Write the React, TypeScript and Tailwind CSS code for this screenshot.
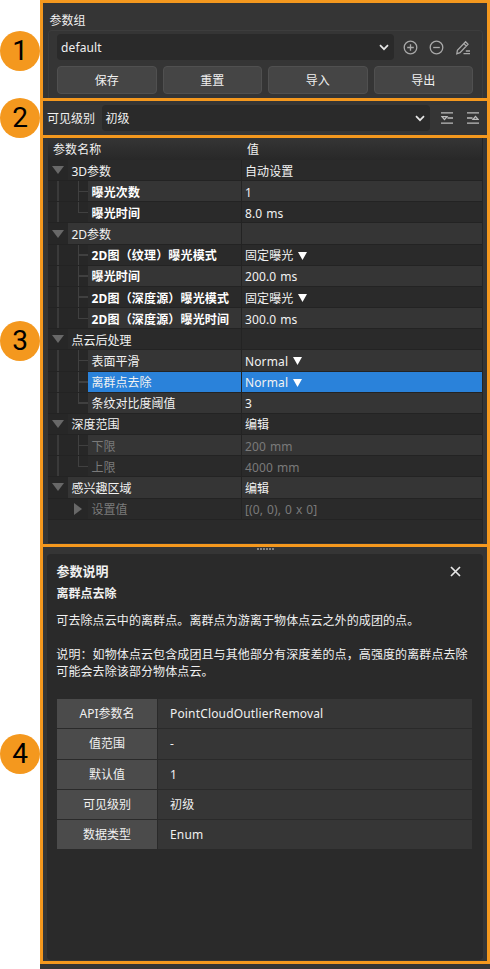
import React from "react";

type Row = {
  name: string;
  value?: string;
  kind: "group" | "child" | "last" | "nested";
  bold?: boolean;
  dim?: boolean;
  menu?: boolean;
  selected?: boolean;
};

const rows: Row[] = [
  { name: "3D参数", value: "自动设置", kind: "group" },
  { name: "曝光次数", value: "1", kind: "child", bold: true },
  { name: "曝光时间", value: "8.0 ms", kind: "last", bold: true },
  { name: "2D参数", kind: "group" },
  { name: "2D图（纹理）曝光模式", value: "固定曝光", kind: "child", bold: true, menu: true },
  { name: "曝光时间", value: "200.0 ms", kind: "child", bold: true },
  { name: "2D图（深度源）曝光模式", value: "固定曝光", kind: "child", bold: true, menu: true },
  { name: "2D图（深度源）曝光时间", value: "300.0 ms", kind: "last", bold: true },
  { name: "点云后处理", kind: "group" },
  { name: "表面平滑", value: "Normal", kind: "child", menu: true },
  { name: "离群点去除", value: "Normal", kind: "child", menu: true, selected: true },
  { name: "条纹对比度阈值", value: "3", kind: "last" },
  { name: "深度范围", value: "编辑", kind: "group" },
  { name: "下限", value: "200 mm", kind: "child", dim: true },
  { name: "上限", value: "4000 mm", kind: "last", dim: true },
  { name: "感兴趣区域", value: "编辑", kind: "group" },
  { name: "设置值", value: "[(0, 0), 0 x 0]", kind: "nested", dim: true },
];

const details = [
  ["API参数名", "PointCloudOutlierRemoval"],
  ["值范围", "-"],
  ["默认值", "1"],
  ["可见级别", "初级"],
  ["数据类型", "Enum"],
];

function Badge({ n, className }: { n: number; className: string }) {
  return (
    <div className={`flex size-10 shrink-0 items-center justify-center rounded-full bg-[#f4981e] font-['Roboto',sans-serif] text-[28px] leading-none text-black ${className}`}>
      {n}
    </div>
  );
}

function Chevron() {
  return (
    <svg width="10" height="7" viewBox="0 0 10 7" fill="none" stroke="#e6e6e6" strokeWidth="1.7">
      <path d="M1 1.2 5 5.2 9 1.2" />
    </svg>
  );
}

function Button({ children }: { children: React.ReactNode }) {
  return (
    <button className="h-7 flex-1 rounded border border-[#505050] bg-[#454545] text-[#f0f0f0]">{children}</button>
  );
}

function Guide({ kind }: { kind: "child" | "last" }) {
  return (
    <div className="flex w-5 shrink-0 pl-[9.5px]">
      <div className={`w-[1.5px] bg-[#404040] ${kind === "last" ? "h-[11px]" : "h-full"}`} />
      <div className="mt-[9.5px] h-[1.5px] flex-1 bg-[#404040]" />
    </div>
  );
}

function TreeRow({ row, index }: { row: Row; index: number }) {
  const bg = row.selected ? "bg-[#2a82da]" : index % 2 ? "bg-[#353535]" : "bg-[#2a2a2a]";
  const color = row.dim ? "text-[#7a7a7a]" : "text-[#f2f2f2]";
  return (
    <div className={`flex h-[21.17px] shrink-0 ${color}`}>
      <div className="flex w-5 shrink-0 items-center justify-center border-b border-[#232323] bg-[#272727]">
        {row.kind === "group" && (
          <svg width="12" height="8" viewBox="0 0 12 8"><path d="M0 0h12L6 8z" fill="#686868" /></svg>
        )}
        {(row.kind === "child" || row.kind === "last") && <div className="h-full w-[2px] bg-[#3a3a3a]" />}
      </div>
      <div className={`flex w-[173px] shrink-0 border-b border-[#232323] ${row.kind === "group" ? bg : "bg-[#272727]"}`}>
        {(row.kind === "child" || row.kind === "last") && <Guide kind={row.kind} />}
        {row.kind === "nested" && (
          <div className="flex w-5 shrink-0 items-center justify-center">
            <svg width="8" height="12" viewBox="0 0 8 12"><path d="M0 0v12l8-6z" fill="#686868" /></svg>
          </div>
        )}
        <div className={`flex flex-1 items-center whitespace-nowrap pt-[2px] pl-[3.5px] ${bg} ${row.bold ? "font-bold tracking-[0.17px] text-white" : ""}`}>
          {row.name}
        </div>
      </div>
      <div className={`flex flex-1 items-center gap-[5px] border-b border-l border-[#232323] pt-[2px] pl-[3px] ${bg}`}>
        <span className="tracking-[0.12px] [word-spacing:0.7px]">{row.value}</span>
        {row.menu && (
          <svg width="9" height="8" viewBox="0 0 9 8"><path d="M0 0h9L4.500 8z" fill="#fff" /></svg>
        )}
      </div>
    </div>
  );
}

export default function App() {
  return (
    <div className="flex h-[969px] w-[490px] overflow-hidden bg-white font-['Noto_Sans','Noto_Sans_CJK_SC',sans-serif] text-[12px] leading-[17px] text-[#f0f0f0]">
      <aside className="flex w-10 shrink-0 flex-col">
        <Badge n={1} className="mt-[31px]" />
        <Badge n={2} className="mt-[27px]" />
        <Badge n={3} className="mt-[183px]" />
        <Badge n={4} className="mt-[373px]" />
      </aside>

      <main className="flex w-[450px] shrink-0 flex-col bg-[#353535]">
        <section className="flex h-[101px] shrink-0 flex-col border-[3px] border-[#f4981e] pr-[4px] pl-[5px]">
          <div className="flex h-[27px] items-center pt-[7px] pl-[1.5px]">参数组</div>
          <div className="flex flex-1 flex-col gap-[6px] rounded-t border border-b-0 border-[#3d3d3d] pt-[3px] pr-[9px] pl-[8px]">
            <div className="flex h-[26px] items-center">
              <div className="flex h-[26px] w-[337px] items-center justify-between rounded bg-[#2a2a2a] pr-[5px] pl-[4px]">
                <span className="pt-px tracking-[0.12px]">default</span>
                <Chevron />
              </div>
              <div className="ml-[9px] flex gap-[11px]">
                <svg width="15" height="15" viewBox="0 0 15 15" fill="none" stroke="#a9a9a9" strokeWidth="1.3">
                  <circle cx="7.500" cy="7.500" r="6.300" /><path d="M4.200 7.500h6.600M7.500 4.200v6.600" />
                </svg>
                <svg width="15" height="15" viewBox="0 0 15 15" fill="none" stroke="#a9a9a9" strokeWidth="1.3">
                  <circle cx="7.500" cy="7.500" r="6.300" /><path d="M4.200 7.500h6.600" />
                </svg>
                <svg width="15" height="15" viewBox="0 0 15 15" fill="none" stroke="#a9a9a9" strokeWidth="1.3">
                  <path d="M1.800 13.800 2.400 10.400 10.600 1.800 13 4.200 5 12.600zM8.900 3.600l2.400 2.400M10.800 11H15M8.500 13.700H15" />
                </svg>
              </div>
            </div>
            <div className="flex gap-[6px]">
              <Button>保存</Button>
              <Button>重置</Button>
              <Button>导入</Button>
              <Button>导出</Button>
            </div>
          </div>
        </section>

        <section className="flex h-[37px] shrink-0 items-center border-[3px] border-t-0 border-[#f4981e] pl-[4px]">
          <span className="w-[55px]">可见级别</span>
          <div className="flex h-[26px] w-[328px] items-center justify-between rounded bg-[#2a2a2a] pr-[5px] pl-[3.5px]">
            <span>初级</span>
            <Chevron />
          </div>
          <div className="ml-[10.5px] flex gap-[14px]">
            <svg width="12" height="12" viewBox="0 0 12 12" fill="none" stroke="#bcbcbc" strokeWidth="1.3">
              <path d="M0 .8h12M0 11.200h12M6.500 6H12M1 4.600h5L3.500 7.600z" />
            </svg>
            <svg width="12" height="12" viewBox="0 0 12 12" fill="none" stroke="#bcbcbc" strokeWidth="1.3">
              <path d="M0 .8h12M0 11.200h12M0 6h5.500M6 7.400h5L8.500 4.400z" />
            </svg>
          </div>
        </section>

        <section className="flex h-[409px] shrink-0 flex-col border-[3px] border-t-0 border-[#f4981e] pr-[4px] pb-px pl-[5px]">
          <div className="flex flex-1 flex-col border-r border-b border-[#252525] bg-[#2a2a2a]">
            <div className="flex h-[22px] shrink-0 items-center bg-linear-to-b from-[#353535] to-[#282828]">
              <span className="w-[199px] pl-[5px] tracking-[0.1px]">参数名称</span>
              <span>值</span>
            </div>
            {rows.map((row, i) => <TreeRow key={i} row={row} index={i} />)}
          </div>
        </section>

        <section className="flex h-[417px] shrink-0 flex-col border-[3px] border-t-0 border-[#f4981e] px-[4px] pb-px">
          <div className="flex h-[7px] shrink-0 justify-center gap-px pt-px">
            {[0, 1, 2, 3, 4, 5].map((i) => <i key={i} className="h-[2px] w-[2px] bg-[#858585]" />)}
          </div>
          <div className="flex flex-1 flex-col rounded-[4px] bg-[#2a2a2a] pr-[11px] pl-[10px]">
            <div className="mt-[8px] flex h-[18px] items-center justify-between pr-[11px]">
              <h2 className="-ml-[0.5px] text-[13px] font-bold">参数说明</h2>
              <svg width="11" height="11" viewBox="0 0 11 11" stroke="#e6e6e6" strokeWidth="1.7"><path d="m1 1 9 9M10 1 1 10" /></svg>
            </div>
            <h3 className="mt-[5px] -ml-[0.5px] font-bold">离群点去除</h3>
            <p className="mt-[10px] -ml-[0.7px] whitespace-nowrap tracking-[0.1px]">可去除点云中的离群点。离群点为游离于物体点云之外的成团的点。</p>
            <p className="mt-[17px] -ml-[0.7px] whitespace-nowrap tracking-[0.1px]">说明：如物体点云包含成团且与其他部分有深度差的点，高强度的离群点去除<br />可能会去除该部分物体点云。</p>
            <div className="mt-[19px] flex flex-col gap-px">
              {details.map(([label, value]) => (
                <div key={label} className="flex h-[29.3px] gap-px">
                  <div className="flex w-[100px] items-center justify-center bg-[#4b4b4b]">{label}</div>
                  <div className="flex flex-1 items-center bg-[#363636] pl-[12px] tracking-[0.16px]">{value}</div>
                </div>
              ))}
            </div>
          </div>
        </section>
      </main>
    </div>
  );
}
